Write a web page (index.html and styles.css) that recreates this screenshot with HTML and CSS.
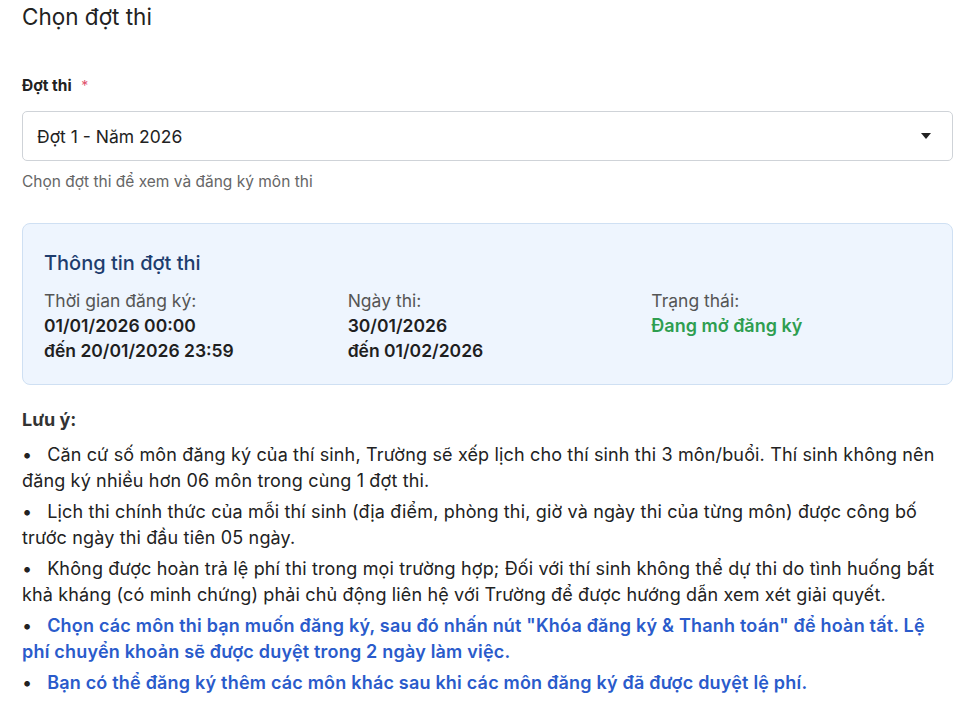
FILE: index.html
```html
<!DOCTYPE html>
<html lang="vi">
<head>
<meta charset="utf-8">
<link rel="stylesheet" href="styles.css">
</head>
<body>
<div class="page">
  <h1 class="title">Chọn đợt thi</h1>
  <div class="field">
    <label class="label">Đợt thi <span class="req">*</span></label>
    <div class="select">
      <span class="select-value">Đợt 1 - Năm 2026</span>
      <svg class="caret" width="10" height="6" viewBox="0 0 10 6"><path d="M0 0h10L5 6z" fill="#222"/></svg>
    </div>
    <div class="help">Chọn đợt thi để xem và đăng ký môn thi</div>
  </div>
  <div class="info">
    <div class="info-title">Thông tin đợt thi</div>
    <div class="info-grid">
      <div class="col">
        <div class="k">Thời gian đăng ký:</div>
        <div class="v">01/01/2026 00:00</div>
        <div class="v">đến 20/01/2026 23:59</div>
      </div>
      <div class="col">
        <div class="k">Ngày thi:</div>
        <div class="v">30/01/2026</div>
        <div class="v">đến 01/02/2026</div>
      </div>
      <div class="col">
        <div class="k">Trạng thái:</div>
        <div class="v green">Đang mở đăng ký</div>
      </div>
    </div>
  </div>
  <div class="notes">
    <div class="notes-title">Lưu ý:</div>
    <ul class="list">
      <li>Căn cứ số môn đăng ký của thí sinh, Trường sẽ xếp lịch cho thí sinh thi 3 môn/buổi. Thí sinh không nên đăng ký nhiều hơn 06 môn trong cùng 1 đợt thi.</li>
      <li>Lịch thi chính thức của mỗi thí sinh (địa điểm, phòng thi, giờ và ngày thi của từng môn) được công bố trước ngày thi đầu tiên 05 ngày.</li>
      <li>Không được hoàn trả lệ phí thi trong mọi trường hợp; Đối với thí sinh không thể dự thi do tình huống bất khả kháng (có minh chứng) phải chủ động liên hệ với Trường để được hướng dẫn xem xét giải quyết.</li>
      <li class="blue">Chọn các môn thi bạn muốn đăng ký, sau đó nhấn nút "Khóa đăng ký &amp; Thanh toán" để hoàn tất. Lệ phí chuyển khoản sẽ được duyệt trong 2 ngày làm việc.</li>
      <li class="blue">Bạn có thể đăng ký thêm các môn khác sau khi các môn đăng ký đã được duyệt lệ phí.</li>
    </ul>
  </div>
</div>
</body>
</html>
```
FILE: styles.css
```css
html, body { margin: 0; padding: 0; background: #fff; }
body { font-family: "Inter", "Noto Sans", sans-serif; color: #212121; }
.page { padding: 3px 18px 0 22px; }
.title { margin: 0; font-size: 22.5px; font-weight: 400; line-height: 28px; color: #222; }
.field { margin-top: 45px; }
.label { display: block; font-size: 15.5px; font-weight: 700; line-height: 20px; color: #222; }
.req { color: #e0516b; margin-left: 6px; font-weight: 400; font-size: 14px; }
.select { margin-top: 15px; height: 48px; border: 1px solid #cfd3d8; border-radius: 5px; display: flex; align-items: center; justify-content: space-between; padding: 0 21px 0 14px; }
.select-value { font-size: 17.5px; color: #222; }
.help { margin-top: 11px; font-size: 15.5px; color: #666; line-height: 20px; }
.info { margin-top: 31px; background: #eef5fe; border: 1px solid #cfe0f3; border-radius: 8px; padding: 25px 21px 21px; }
.info-title { font-size: 20px; font-weight: 500; color: #1d3d6e; line-height: 28px; }
.info-grid { margin-top: 11px; display: grid; grid-template-columns: repeat(3, 1fr); column-gap: 24px; }
.k { font-size: 17.5px; color: #555; line-height: 25px; }
.v { font-size: 17.5px; font-weight: 600; color: #1f1f1f; line-height: 25px; }
.v.green { color: #2e9e50; font-size: 18px; }
.notes { margin-top: 22px; }
.notes-title { font-size: 18px; font-weight: 700; line-height: 26px; color: #333; }
.list { list-style: none; margin: 9px 0 0; padding: 0; }
.list li { font-size: 18px; line-height: 26px; color: #222; margin-bottom: 5px; letter-spacing: 0.15px; }
.list li::before { content: "•"; color: #222; margin-right: 15px; font-weight: 400; letter-spacing: 0; }
.list li.blue { color: #2a5bcb; font-weight: 600; letter-spacing: 0.2px; }
```
